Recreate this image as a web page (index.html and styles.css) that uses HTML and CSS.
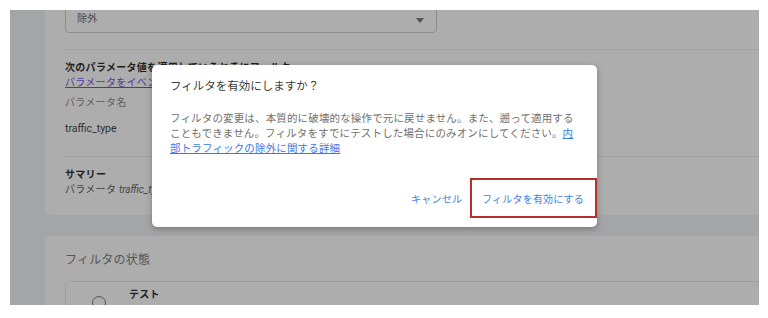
FILE: index.html
```html
<!DOCTYPE html>
<html lang="ja">
<head>
  <meta charset="UTF-8">
  <meta name="viewport" content="width=device-width, initial-scale=1.0">
  <title>フィルタを有効にしますか？</title>
  <link rel="stylesheet" href="styles.css">
</head>
<body>

  <div class="frame">
    <div class="rail"></div>

    <div class="main">
      <!-- 条件カード -->
      <div class="card card-top">
        <div class="select">
          <span>除外</span>
          <svg class="caret" width="8" height="5" viewBox="0 0 8 5"><path d="M0 0h8L4 5z" fill="#555"/></svg>
        </div>
        <div class="rule"></div>

        <div class="label-strong">次のパラメータ値を適用しているときにフィルタ</div>
        <a class="link" href="#">パラメータをイベントに設定する方法</a>
        <div class="label-muted">パラメータ名</div>
        <div class="value">traffic_type</div>
        <div class="rule rule-low"></div>

        <div class="label-strong summary">サマリー</div>
        <div class="summary-text">パラメータ <i>traffic_type</i> の値が internal と完全に一致する</div>
      </div>

      <!-- 状態カード -->
      <div class="card card-state">
        <div class="state-title">フィルタの状態</div>
        <div class="option">
          <div class="radio"></div>
          <div class="label-strong">テスト</div>
        </div>
      </div>
    </div>

    <!-- ダイアログ -->
    <div class="dialog">
      <div class="dialog-title">フィルタを有効にしますか？</div>
      <p class="dialog-body">フィルタの変更は、本質的に破壊的な操作で元に戻せません。また、遡って適用することもできません。フィルタをすでにテストした場合にのみオンにしてください。<a href="#">内部トラフィックの除外に関する詳細</a></p>
      <div class="dialog-actions">
        <button class="btn">キャンセル</button>
        <button class="btn btn-primary">フィルタを有効にする</button>
      </div>
    </div>
  </div>

</body>
</html>
```

FILE: styles.css
```css
* {
  box-sizing: border-box;
}

body {
  margin: 0;
  background: #fff;
  font-family: Roboto, "Noto Sans CJK JP", sans-serif;
}

.frame {
  position: relative;
  display: flex;
  width: 749px;
  height: 295px;
  margin: 10px 0 0 10px;
  background: #a4a5a7;
  overflow: hidden;
}

.rail {
  flex: none;
  width: 35px;
}

.main {
  flex: none;
  width: 760px;
  display: flex;
  flex-direction: column;
  gap: 21px;
}

.card {
  background: #adadad;
  padding-left: 20px;
}

.card-top {
  border-radius: 0 0 6px 6px;
  padding-bottom: 18px;
}

.card-state {
  flex: 1;
  border-radius: 6px 6px 0 0;
  padding-top: 15px;
}

/* セレクト */
.select {
  display: flex;
  align-items: flex-end;
  justify-content: space-between;
  width: 372px;
  height: 40px;
  margin-top: -17px;
  padding: 0 12px 6px 11px;
  border: 1px solid #8c8c8c;
  border-radius: 4px;
  font-size: 10.3px;
  line-height: 14px;
  color: #4a4a4a;
}

.caret {
  margin-bottom: 3px;
}

.rule {
  height: 1px;
  margin-top: 16px;
  background: #a0a0a0;
}

.rule-low {
  margin-top: 20px;
}

.label-strong,
.link,
.label-muted,
.value,
.summary-text,
.state-title {
  width: fit-content;
}

.label-strong {
  font-size: 10px;
  letter-spacing: 0.3px;
  line-height: 15px;
  font-weight: 700;
  color: #1f1f1f;
  margin-top: 10px;
}

.summary {
  margin-top: 10px;
}

.link {
  display: block;
  font-size: 10px;
  letter-spacing: 0.3px;
  line-height: 15px;
  color: #4f3a9a;
}

.label-muted {
  margin-top: 5px;
  font-size: 10px;
  letter-spacing: 0.3px;
  line-height: 15px;
  color: #5e5e5e;
}

.value {
  margin-top: 11px;
  font-size: 10.5px;
  line-height: 15px;
  color: #2e2e2e;
}

.summary-text {
  font-size: 10px;
  letter-spacing: 0.3px;
  line-height: 15px;
  color: #444;
  white-space: nowrap;
}

.summary-text i {
  letter-spacing: 0;
}

.state-title {
  font-size: 12px;
  letter-spacing: 0.2px;
  line-height: 18px;
  color: #555;
}

.option {
  display: flex;
  align-items: flex-start;
  gap: 23px;
  height: 80px;
  margin-top: 12px;
  padding: 5px 0 0 26px;
  border: 1px solid #9e9e9e;
  border-radius: 5px;
}

.option .label-strong {
  margin-top: 0;
}

.radio {
  flex: none;
  width: 14px;
  height: 14px;
  margin-top: 9px;
  border: 1.5px solid #555;
  border-radius: 50%;
}

/* ダイアログ */
.dialog {
  position: absolute;
  left: 142px;
  top: 55px;
  width: 445px;
  height: 162px;
  padding: 13px 0 9px 18px;
  background: #fff;
  border-radius: 5px;
  box-shadow: 0 2px 6px rgba(0, 0, 0, 0.28);
}

.dialog-title {
  font-size: 11.5px;
  line-height: 16px;
  color: #3c3c3c;
}

.dialog-body {
  width: 408px;
  margin: 17px 0 0;
  font-size: 10.5px;
  letter-spacing: 0.15px;
  line-height: 15px;
  color: #707070;
}

.dialog-body a {
  color: #3b78e7;
}

.dialog-actions {
  display: flex;
  justify-content: flex-end;
  align-items: center;
  gap: 8px;
  margin-top: 22px;
}

.btn {
  height: 40px;
  padding: 0;
  border: none;
  background: none;
  font-family: inherit;
  font-size: 10px;
  letter-spacing: 0.2px;
  color: #4280e6;
  cursor: pointer;
}

.btn-primary {
  padding: 0 11px 0 10px;
  border: 2px solid #b3302b;
}
```
